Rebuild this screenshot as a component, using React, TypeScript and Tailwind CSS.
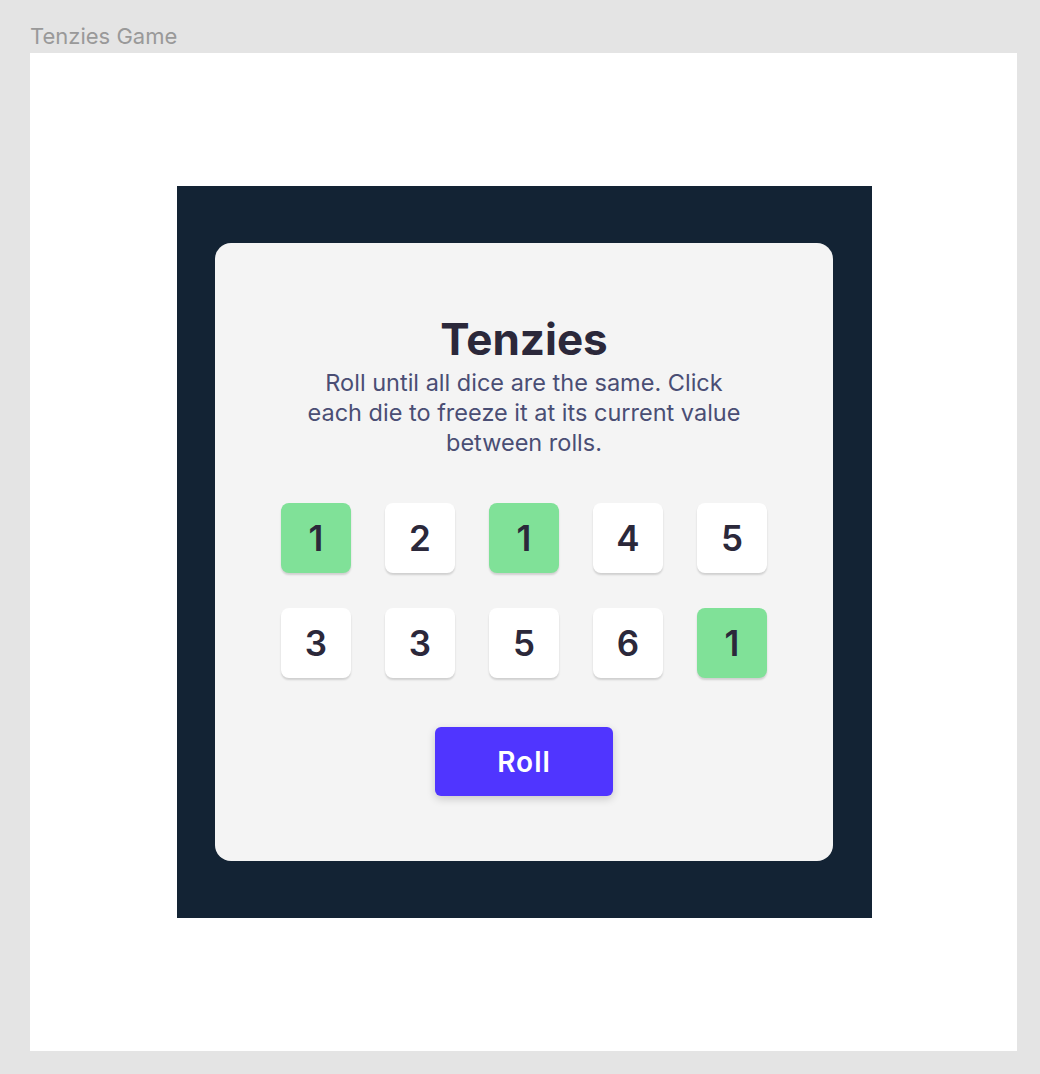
import { useState } from "react";

type Die = { value: number; held: boolean };

const START: Die[] = [
  { value: 1, held: true },
  { value: 2, held: false },
  { value: 1, held: true },
  { value: 4, held: false },
  { value: 5, held: false },
  { value: 3, held: false },
  { value: 3, held: false },
  { value: 5, held: false },
  { value: 6, held: false },
  { value: 1, held: true },
];

const DieBox = ({ die, onClick }: { die: Die; onClick: () => void }) => (
  <button
    onClick={onClick}
    className={`flex h-[70px] w-[70px] items-center justify-center rounded-[8px] shadow-[0_2px_2px_rgba(0,0,0,0.15)] text-[35px] font-semibold leading-none text-[#2b283a] ${
      die.held ? "bg-[#80e198]" : "bg-white"
    }`}
  >
    {die.value}
  </button>
);

export default function App() {
  const [dice, setDice] = useState<Die[]>(START);

  const hold = (i: number) =>
    setDice((d) => d.map((x, j) => (j === i ? { ...x, held: !x.held } : x)));

  const roll = () =>
    setDice((d) =>
      d.map((x) => (x.held ? x : { ...x, value: Math.ceil(Math.random() * 6) }))
    );

  return (
    <div className="min-h-screen bg-[#e4e4e4] pl-[30px] pt-[21px] font-['Inter',sans-serif]">
      <div className="h-[32px] text-[22px] leading-[30px] text-[#999999]">Tenzies Game</div>

      <div className="flex h-[998px] w-[987px] items-center justify-center bg-white pl-[2px]">
        <main className="flex h-[732px] w-[695px] items-center bg-[#132334] pl-[38px]">
          <div className="flex h-[618px] w-[618px] flex-col items-center rounded-[16px] bg-[#f4f4f4] pt-[70px]">
            <h1 className="text-[44px] font-bold leading-[53px] text-[#2b283a]">Tenzies</h1>
            <p className="mt-[2px] w-[450px] text-center text-[23.5px] leading-[30px] text-[#4a4e74]">
              Roll until all dice are the same. Click each die to freeze it at its current value
              between rolls.
            </p>

            <div className="mt-[45px] grid grid-cols-5 gap-x-[34px] gap-y-[35px]">
              {dice.map((d, i) => (
                <DieBox key={i} die={d} onClick={() => hold(i)} />
              ))}
            </div>

            <button
              onClick={roll}
              className="mt-[49px] h-[69px] w-[178px] rounded-[6px] bg-[#5035ff] text-[28px] font-semibold tracking-[1px] text-white shadow-[0_3px_8px_rgba(0,0,0,0.18)]"
            >
              Roll
            </button>
          </div>
        </main>
      </div>
    </div>
  );
}
